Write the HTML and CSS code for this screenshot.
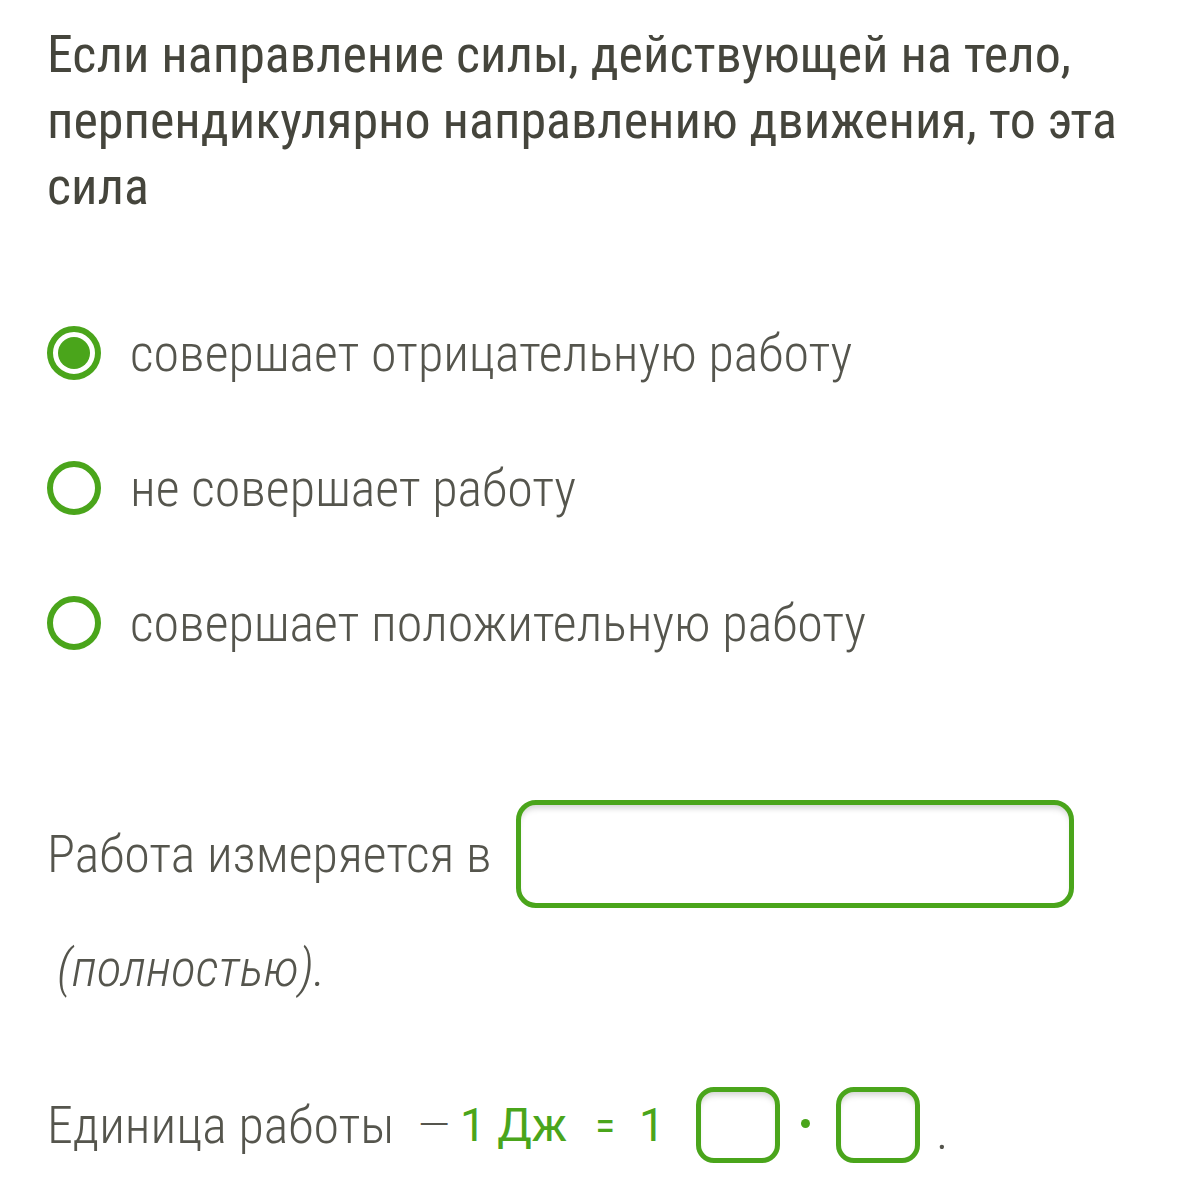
FILE: index.html
```html
<!DOCTYPE html>
<html lang="ru">
<head>
<meta charset="utf-8">
<link rel="stylesheet" href="styles.css">
</head>
<body>
<div class="page">
  <h1 class="question">Если направление силы, действующей на тело, перпендикулярно направлению движения, то эта сила</h1>
  <div class="options">
    <div class="option"><span class="radio checked"></span><span class="label">совершает отрицательную работу</span></div>
    <div class="option"><span class="radio"></span><span class="label">не совершает работу</span></div>
    <div class="option"><span class="radio"></span><span class="label">совершает положительную работу</span></div>
  </div>
  <div class="fill">
    <span class="text">Работа измеряется в</span><span class="input wide"></span><span class="text note">(полностью).</span>
  </div>
  <div class="unit">
    <span class="text">Единица работы</span>
    <span class="dash">—</span>
    <span class="green">1 Дж</span>
    <span class="green eq">=</span>
    <span class="green one">1</span>
    <span class="input small"></span>
    <span class="dot"></span>
    <span class="input small second"></span>
    <span class="period">.</span>
  </div>
</div>
</body>
</html>
```

FILE: styles.css
```css
html, body {
  margin: 0;
  padding: 0;
  background: #ffffff;
}
body {
  font-family: Roboto, "Noto Sans", sans-serif;
  color: #4b4b43;
}
.page {
  padding: 22px 40px 0 47px;
}
.question {
  margin: 0;
  font-size: 52px;
  font-weight: 400;
  line-height: 66px;
  font-stretch: condensed;
  color: #45453c;
}
.options {
  margin-top: 106px;
  display: flex;
  flex-direction: column;
  gap: 81px;
}
.option {
  display: flex;
  align-items: center;
  gap: 29px;
  height: 54px;
}
.radio {
  box-sizing: border-box;
  width: 54px;
  height: 54px;
  border: 6px solid #4aa51b;
  border-radius: 50%;
  flex: none;
  position: relative;
}
.radio.checked::after {
  content: "";
  position: absolute;
  left: 5px;
  top: 5px;
  width: 32px;
  height: 32px;
  border-radius: 50%;
  background: #4aa51b;
}
.label,
.text,
.period {
  font-size: 52px;
  font-weight: 300;
  font-stretch: condensed;
  color: #55554d;
}
.fill {
  margin-top: 150px;
  display: flex;
  flex-wrap: wrap;
  align-items: center;
  row-gap: 30px;
}
.input {
  box-sizing: border-box;
  display: inline-block;
  border: 5px solid #4aa51b;
  background: #fff;
  box-shadow: inset 0 6px 6px -3px rgba(0,0,0,0.18);
}
.input.wide {
  width: 558px;
  height: 108px;
  border-radius: 20px;
  margin-left: 24px;
}
.note {
  width: 100%;
  font-style: italic;
  padding-left: 10px;
}
.unit {
  margin-top: 88px;
  display: flex;
  align-items: center;
}
.dash {
  font-size: 41px;
  font-weight: 300;
  color: #55554d;
  margin-left: 24px;
}
.green {
  color: #4aa51b;
  font-size: 46px;
  font-weight: 400;
  margin-left: 10px;
}
.eq {
  margin-left: 28px;
  font-stretch: condensed;
  font-size: 42px;
}
.one {
  margin-left: 24px;
}
.input.small {
  width: 84px;
  height: 76px;
  border-radius: 18px;
  margin-left: 31px;
  flex: none;
}
.input.small.second {
  margin-left: 0;
}
.dot {
  width: 9px;
  height: 9px;
  border-radius: 50%;
  background: #4aa51b;
  margin: 0 26px 4px 21px;
  flex: none;
}
.period {
  margin-left: 16px;
  padding-top: 12px;
}
```
